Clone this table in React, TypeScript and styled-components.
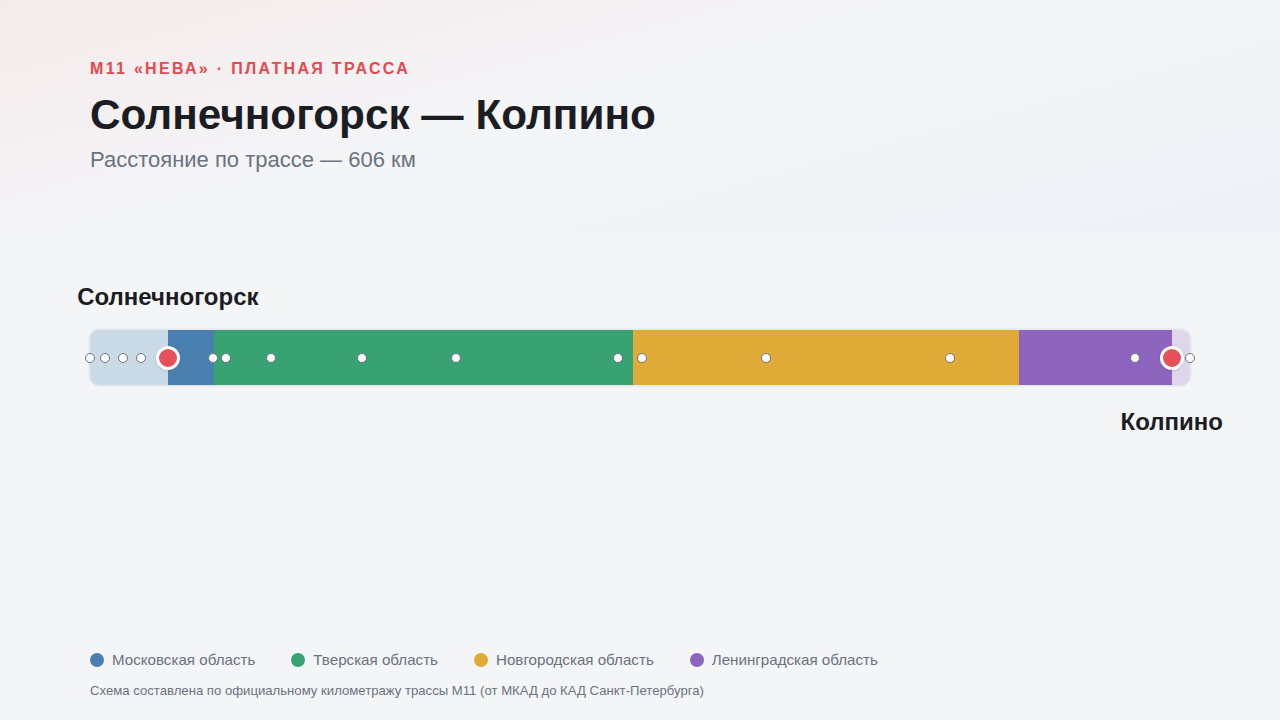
import React from 'react';
import styled, { createGlobalStyle } from 'styled-components';

const GlobalStyle = createGlobalStyle`
  html, body {
    margin: 0;
    padding: 0;
    background: #f4f5f7;
    font-family: "Liberation Sans", Arial, sans-serif;
  }
`;

// km of the whole M11 from MKAD to KAD
const TOTAL_KM = 664;

const REGIONS = [
  { name: 'Московская область', color: '#4a80b0' },
  { name: 'Тверская область', color: '#38a272' },
  { name: 'Новгородская область', color: '#e0aa36' },
  { name: 'Ленинградская область', color: '#8e65be' },
];

const SEGMENTS = [
  { from: 0, to: 47, color: '#cbdae7' },
  { from: 47, to: 75, color: '#4a80b0' },
  { from: 75, to: 328, color: '#38a272' },
  { from: 328, to: 561, color: '#e0aa36' },
  { from: 561, to: 653, color: '#8e65be' },
  { from: 653, to: 664, color: '#ded6eb' },
];

const STOPS = [0, 9, 20, 31, 74, 82, 109, 164, 221, 319, 333, 408, 519, 631, 664];
const START_KM = 47;
const END_KM = 653;

const pct = (km: number) => `${(km / TOTAL_KM) * 100}%`;

const Page = styled.div`
  min-height: 100vh;
  display: flex;
  flex-direction: column;
`;

const Hero = styled.header`
  height: 232px;
  box-sizing: border-box;
  padding: 59px 90px 0;
  background: linear-gradient(165deg, rgba(245, 95, 80, 0.07) 0%, rgba(244, 245, 247, 0) 45%, rgba(120, 160, 220, 0.05) 100%);
  display: flex;
  flex-direction: column;
`;

const Eyebrow = styled.div`
  font-size: 16px;
  line-height: 19px;
  font-weight: 700;
  letter-spacing: 2.3px;
  color: #e5484d;
  text-transform: uppercase;
`;

const Title = styled.h1`
  margin: 13px 0 0;
  font-size: 42.3px;
  line-height: 48px;
  font-weight: 700;
  color: #1b1d23;
`;

const Subtitle = styled.div`
  margin-top: 7px;
  font-size: 22px;
  line-height: 28px;
  color: #6b7280;
`;

const Route = styled.section`
  margin: 50px 90px 0;
  width: 1100px;
`;

const LabelRow = styled.div`
  position: relative;
  height: 29px;
`;

const CityLabel = styled.div`
  position: absolute;
  top: 0;
  transform: translateX(-50%);
  white-space: nowrap;
  font-size: 24px;
  line-height: 29px;
  font-weight: 700;
  color: #1b1d23;
`;

const Track = styled.div`
  position: relative;
  margin: 19px 0 22px;
  height: 55px;
`;

const Bar = styled.div`
  display: flex;
  height: 100%;
  border-radius: 9px;
  overflow: hidden;
  box-shadow: 0 0 0 1.5px #e3e6eb;
`;

const Segment = styled.div<{ $color: string }>`
  background: ${({ $color }) => $color};
  height: 100%;
`;

const Stop = styled.span`
  position: absolute;
  top: 50%;
  width: 10px;
  height: 10px;
  box-sizing: border-box;
  border-radius: 50%;
  background: #ffffff;
  border: 1.5px solid #6b7280;
  transform: translate(-50%, -50%);
`;

const Terminal = styled.span`
  position: absolute;
  top: 50%;
  width: 24px;
  height: 24px;
  box-sizing: border-box;
  border-radius: 50%;
  background: #e5505b;
  border: 3px solid #ffffff;
  box-shadow: 0 1px 3px rgba(0, 0, 0, 0.12);
  transform: translate(-50%, -50%);
`;

const Footer = styled.footer`
  margin-top: auto;
  padding: 0 90px 21px;
  display: flex;
  flex-direction: column;
  gap: 13px;
`;

const Legend = styled.div`
  display: flex;
  gap: 36px;
`;

const LegendItem = styled.div`
  display: flex;
  align-items: center;
  gap: 8px;
  font-size: 15.15px;
  line-height: 20px;
  color: #6b7280;
`;

const Swatch = styled.span<{ $color: string }>`
  width: 14px;
  height: 14px;
  border-radius: 50%;
  background: ${({ $color }) => $color};
`;

const Note = styled.div`
  font-size: 13.15px;
  line-height: 16px;
  color: #6b7280;
`;

export default function App() {
  return (
    <Page>
      <GlobalStyle />
      <Hero>
        <Eyebrow>M11 «Нева» · платная трасса</Eyebrow>
        <Title>Солнечногорск — Колпино</Title>
        <Subtitle>Расстояние по трассе — 606 км</Subtitle>
      </Hero>
      <Route>
        <LabelRow>
          <CityLabel style={{ left: pct(START_KM) }}>Солнечногорск</CityLabel>
        </LabelRow>
        <Track>
          <Bar>
            {SEGMENTS.map((s) => (
              <Segment key={s.from} $color={s.color} style={{ width: pct(s.to - s.from) }} />
            ))}
          </Bar>
          {STOPS.map((km) => (
            <Stop key={km} style={{ left: pct(km) }} />
          ))}
          <Terminal style={{ left: pct(START_KM) }} />
          <Terminal style={{ left: pct(END_KM) }} />
        </Track>
        <LabelRow>
          <CityLabel style={{ left: pct(END_KM) }}>Колпино</CityLabel>
        </LabelRow>
      </Route>
      <Footer>
        <Legend>
          {REGIONS.map((r) => (
            <LegendItem key={r.name}>
              <Swatch $color={r.color} />
              {r.name}
            </LegendItem>
          ))}
        </Legend>
        <Note>Схема составлена по официальному километражу трассы М11 (от МКАД до КАД Санкт-Петербурга)</Note>
      </Footer>
    </Page>
  );
}
